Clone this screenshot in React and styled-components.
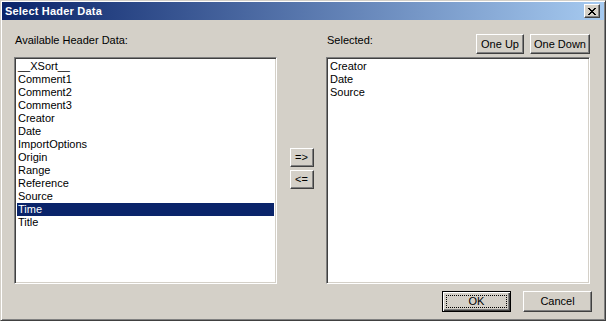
import React from "react";
import styled, { createGlobalStyle } from "styled-components";

const GlobalStyle = createGlobalStyle`
  html, body {
    margin: 0;
    padding: 0;
    background: #d4d0c8;
  }
  body {
    font-family: "Liberation Sans", Arial, sans-serif;
    font-size: 11px;
    color: #000;
  }
`;

const Window = styled.div`
  box-sizing: border-box;
  width: 606px;
  height: 321px;
  display: flex;
  flex-direction: column;
  padding: 1px;
  background: #d4d0c8;
  border-top: 1px solid #d4d0c8;
  border-left: 1px solid #d4d0c8;
  border-right: 1px solid #404040;
  border-bottom: 1px solid #404040;
  box-shadow: inset 1px 1px 0 #ffffff, inset -1px -1px 0 #808080;
`;

const TitleBar = styled.div`
  height: 18px;
  display: flex;
  align-items: center;
  justify-content: space-between;
  padding: 0 4px 0 3px;
  background: linear-gradient(to right, #0a246a, #a6caf0);
  color: #fff;
  font-weight: bold;
  font-size: 11px;
`;

const TitleText = styled.span`
  letter-spacing: 0.2px;
`;

const CloseButton = styled.div`
  box-sizing: border-box;
  width: 16px;
  height: 14px;
  display: flex;
  align-items: center;
  justify-content: center;
  background: #d4d0c8;
  border-top: 1px solid #fff;
  border-left: 1px solid #fff;
  border-right: 1px solid #404040;
  border-bottom: 1px solid #404040;
  box-shadow: inset -1px -1px 0 #808080;
`;

const Body = styled.div`
  flex: 1;
  display: flex;
  flex-direction: column;
  padding: 0 11px 0 12px;
`;

const HeaderRow = styled.div`
  height: 37px;
  display: flex;
`;

const Column = styled.div`
  width: ${(p) => p.$width}px;
  display: flex;
  align-items: flex-start;
  justify-content: space-between;
`;

const Label = styled.div`
  margin: 14px 0 0 1px;
  line-height: 13px;
`;

const ButtonGroup = styled.div`
  display: flex;
  gap: 6px;
  margin-top: 14px;
`;

const Button = styled.div`
  box-sizing: border-box;
  width: ${(p) => p.$width}px;
  height: ${(p) => p.$height || 20}px;
  display: flex;
  align-items: center;
  justify-content: center;
  background: #d4d0c8;
  border-top: 1px solid #fff;
  border-left: 1px solid #fff;
  border-right: 1px solid #404040;
  border-bottom: 1px solid #404040;
  box-shadow: inset -1px -1px 0 #808080;
  line-height: 13px;
  white-space: nowrap;
`;

const DefaultButton = styled(Button)`
  border: 1px solid #000;
  box-shadow: inset 1px 1px 0 #fff, inset -1px -1px 0 #404040,
    inset -2px -2px 0 #808080;
  padding: 3px;
`;

const FocusRing = styled.div`
  flex: 1;
  align-self: stretch;
  display: flex;
  align-items: center;
  justify-content: center;
  border: 1px dotted #000;
`;

const ListRow = styled.div`
  height: 227px;
  display: flex;
`;

const ListBox = styled.div`
  box-sizing: border-box;
  width: ${(p) => p.$width}px;
  height: 100%;
  padding: 2px;
  background: #fff;
  border-top: 1px solid #808080;
  border-left: 1px solid #808080;
  border-right: 1px solid #fff;
  border-bottom: 1px solid #fff;
  box-shadow: inset 1px 1px 0 #404040, inset -1px -1px 0 #d4d0c8;
`;

const Item = styled.div`
  height: 13px;
  line-height: 13px;
  padding-left: 1px;
  white-space: pre;
  background: ${(p) => (p.$selected ? "#0a246a" : "transparent")};
  color: ${(p) => (p.$selected ? "#fff" : "#000")};
`;

const Mover = styled.div`
  width: 49px;
  display: flex;
  flex-direction: column;
  align-items: center;
  justify-content: center;
  gap: 3px;
  padding-bottom: 4px;
`;

const Footer = styled.div`
  flex: 1;
  display: flex;
  justify-content: flex-end;
  align-items: flex-start;
  gap: 12px;
  padding: 7px 1px 0 0;
`;

const available = [
  "__XSort__",
  "Comment1",
  "Comment2",
  "Comment3",
  "Creator",
  "Date",
  "ImportOptions",
  "Origin",
  "Range",
  "Reference",
  "Source",
  "Time",
  "Title",
];

const selected = ["Creator", "Date", "Source"];

const App = () => {
  return (
    <>
      <GlobalStyle />
      <Window>
        <TitleBar>
          <TitleText>Select Hader Data</TitleText>
          <CloseButton>
            <svg width="8" height="7" viewBox="0 0 8 7">
              <path
                d="M0 0h2v1h1v1h2v-1h1v-1h2v1h-1v1h-1v1h-1v1h1v1h1v1h1v1h-2v-1h-1v-1h-2v1h-1v1h-2v-1h1v-1h1v-1h1v-1h-1v-1h-1v-1h-1z"
                fill="#000"
              />
            </svg>
          </CloseButton>
        </TitleBar>
        <Body>
          <HeaderRow>
            <Column $width={263}>
              <Label>Available Header Data:</Label>
            </Column>
            <Column $width={49} />
            <Column $width={264}>
              <Label>Selected:</Label>
              <ButtonGroup>
                <Button $width={48}>One Up</Button>
                <Button $width={60}>One Down</Button>
              </ButtonGroup>
            </Column>
          </HeaderRow>
          <ListRow>
            <ListBox $width={263}>
              {available.map((name) => (
                <Item key={name} $selected={name === "Time"}>
                  {name}
                </Item>
              ))}
            </ListBox>
            <Mover>
              <Button $width={24} $height={19}>=&gt;</Button>
              <Button $width={24} $height={19}>&lt;=</Button>
            </Mover>
            <ListBox $width={264}>
              {selected.map((name) => (
                <Item key={name}>{name}</Item>
              ))}
            </ListBox>
          </ListRow>
          <Footer>
            <DefaultButton $width={69} $height={21}>
              <FocusRing>OK</FocusRing>
            </DefaultButton>
            <Button $width={69} $height={21}>Cancel</Button>
          </Footer>
        </Body>
      </Window>
    </>
  );
};

export default App;
